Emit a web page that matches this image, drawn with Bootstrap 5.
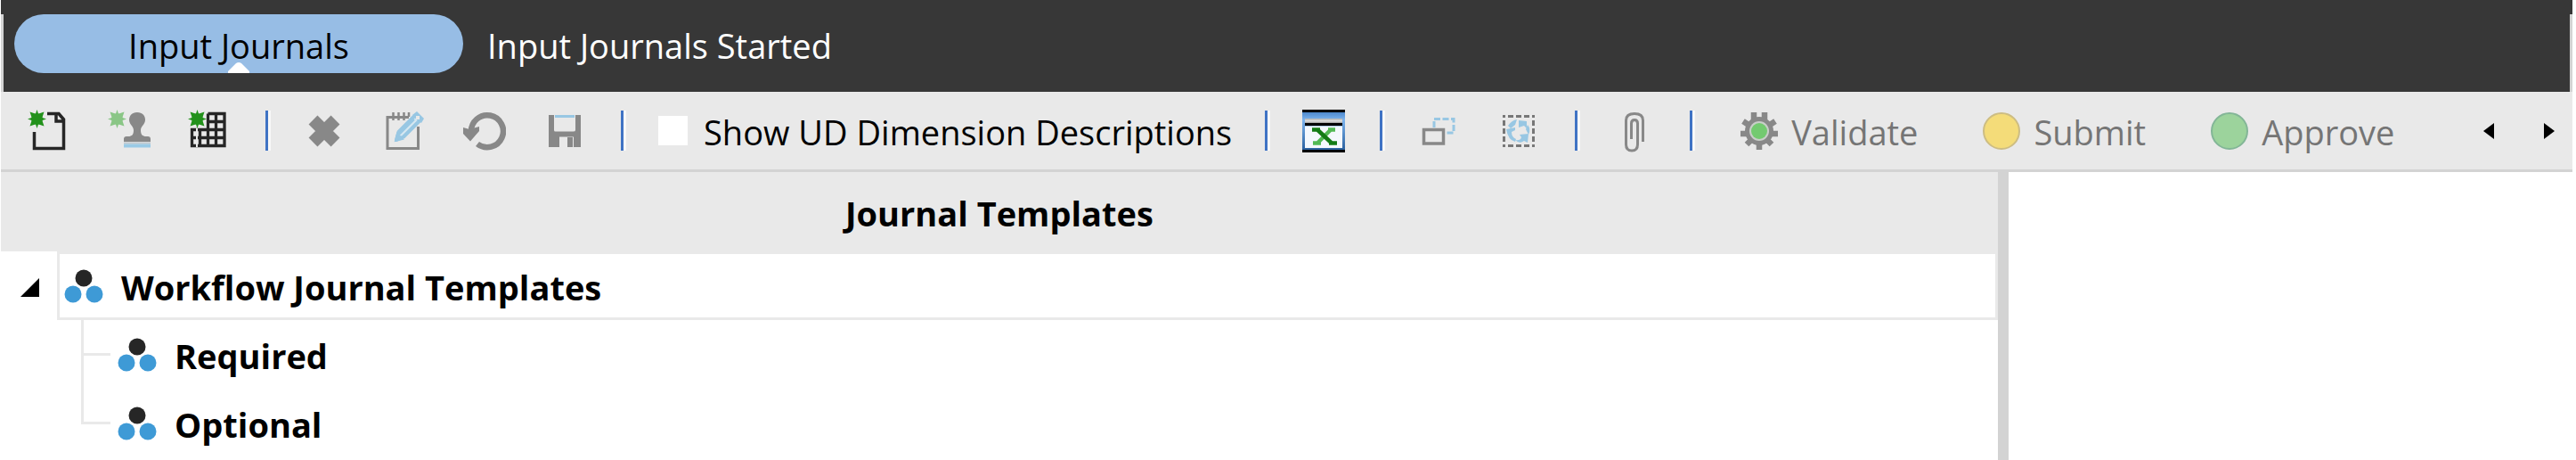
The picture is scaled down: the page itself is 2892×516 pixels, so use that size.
<!DOCTYPE html>
<html lang="en">
<head>
<meta charset="utf-8">
<meta name="viewport" content="width=device-width, initial-scale=1">
<title>Input Journals</title>
<link href="https://cdn.jsdelivr.net/npm/bootstrap@5.3.0/dist/css/bootstrap.min.css" rel="stylesheet">
<style>
  :root { --dark: #373737; --bar: #e9e9e9; --rule: #d3d3d3; --pill: #97bde5; --off: #757575; }
  body { font-family: "Open Sans", "Noto Sans", sans-serif; font-size: 38px; line-height: 48px; color: #000; background: #fff; }
  .app-shell { padding: 0 4px 0 1px; }
  .text-cell { padding-top: 3px; }
  .title-strip { background: var(--dark); padding-top: 16px; }
  .title-row { border: solid var(--rule); border-width: 0 3px; height: 87px; padding-left: 12px; gap: 27px; }
  .step-pill { width: 504px; height: 66px; border: 0; padding: 3px 0 0; border-radius: 33px; background: var(--pill); color: #000; }
  .step-pill svg { left: 240px; bottom: 0; }
  .step-state { color: #fff; padding-top: 11px; }
  .tool-bar { background: var(--bar); border-bottom: 3px solid var(--rule); height: 90px; padding-left: 30px; }
  .tool-group { gap: 42px; }
  .tool-bar button { border: 0; padding: 0; background: none; color: inherit; }
  .tool-bar svg { display: block; flex: none; }
  .divider { width: 6px; height: 45px; margin: 0 36px 0 39px; background: linear-gradient(90deg, #3f73c4 0 3px, #f8f8f8 3px 6px); flex: none; }
  .check-tool { gap: 18px; margin-right: -2px; }
  .check-tool .form-check-input[type=checkbox] { width: 33px; height: 33px; margin: 0; border: 0; border-radius: 0; background-color: #fff; }
  .stages { gap: 70px; margin-left: 12px; }
  .tool-bar .stage-btn { color: var(--off); gap: 12px; }
  .scrollers { gap: 56px; padding-right: 20px; }
  .tree-pane { flex: 0 0 77.65%; }
  .pane-title { background: var(--bar); height: 89px; font-size: 38px; line-height: 48px; }
  .splitter { width: 12px; background: var(--rule); flex: none; }
  .tree-row { height: 77px; }
  .root-row .toggle { width: 63px; padding: 4px 0 0 22px; border: 0; background: none; }
  .root-box { border: 3px solid var(--bar); gap: 21px; padding-left: 6px; }
  .branch { margin-left: 90px; }
  .branch .tree-row { gap: 21px; }
  .branch .elbow { width: 33px; height: 77px; margin-right: -12px; }
</style>
</head>
<body>
<svg width="0" height="0" class="position-absolute" aria-hidden="true">
  <defs>
    <g id="burst">
      <circle cx="10.500" cy="10.500" r="6.500"/>
      <path d="M10.500 0l2 6h-4zM10.500 21l2-6h-4zM0 10.500l6-2v4zM21 10.500l-6-2v4zM2.500 2.500l6 2-4 4zM18.500 2.500l-2 6-4-4zM2.500 18.500l2-6 4 4zM18.500 18.500l-6-2 4-4z"/>
    </g>
    <g id="nodes">
      <circle cx="21" cy="9" r="9.500" fill="#262626"/>
      <circle cx="9" cy="27" r="9.500" fill="#3e9ad6"/>
      <circle cx="33" cy="27" r="9.500" fill="#3e9ad6"/>
    </g>
    <linearGradient id="xb" x2="0" y2="1"><stop offset="0" stop-color="#4d88cc"/><stop offset=".2" stop-color="#7db4ee"/><stop offset="1" stop-color="#2b619f"/></linearGradient>
    <linearGradient id="xt" x2="0" y2="1"><stop offset="0" stop-color="#b0b0b0"/><stop offset=".4" stop-color="#e2e2e2"/><stop offset="1" stop-color="#555"/></linearGradient>
  </defs>
</svg>

<div class="app-shell d-flex flex-column min-vh-100">
  <header class="title-strip">
    <div class="title-row d-flex align-items-start">
      <button type="button" class="step-pill position-relative">Input Journals
        <svg class="position-absolute" width="24" height="12" viewBox="0 0 24 12" aria-hidden="true"><path d="M0 12V10L9 1Q12-1 15 1L24 10V12z" fill="#fff"/></svg>
      </button>
      <div class="step-state">Input Journals Started</div>
    </div>
  </header>

  <div class="tool-bar d-flex align-items-center" role="toolbar" aria-label="Journal tools">
    <div class="tool-group d-flex align-items-center">
      <button type="button" aria-label="New journal"><svg width="48" height="48" viewBox="0 0 48 48"><path d="M22 4.500H35L40.500 11V43.500H7.500V25M32 4.500V13H41" fill="none" stroke="#262626" stroke-width="3.500"/><path d="M35 4l7 8h-3z" fill="#262626"/><use href="#burst" fill="#22911b"/></svg></button>
      <button type="button" aria-label="New from template"><svg width="48" height="48" viewBox="0 0 48 48"><use href="#burst" fill="#8ac686"/><path d="M33 3c6 0 9 4 9 8.500 0 5-5 7-5 11.500 0 5 2 7 6 7h2q3 0 3 3v3H18v-3q0-3 3-3h2c4 0 6-2 6-7 0-4.500-5-6.500-5-11.500C24 7 27 3 33 3z" fill="#888"/><path d="M18 37.500h30" stroke="#bfc8ce" stroke-width="2"/><path d="M18 40.500h30" stroke="#9acae6" stroke-width="4"/></svg></button>
      <button type="button" aria-label="New grid"><svg width="48" height="48" viewBox="0 0 48 48"><path d="M22.500 4.500H41V40.500H4.500V22.500H41M22.500 4.500V40.500M31.500 4.500V40.500M41 3V42M13.500 22.500V40.500M22.500 13.500H41M4.500 31.500H41" fill="none" stroke="#262626" stroke-width="3.300"/><path d="M10 21V42" stroke="#e9e9e9" stroke-width="2"/><use href="#burst" fill="#22911b"/></svg></button>
    </div>
    <span class="divider"></span>
    <div class="tool-group d-flex align-items-center">
      <button type="button" aria-label="Delete"><svg width="48" height="48" viewBox="0 0 48 48"><path d="M11.500 11.500L36.500 36.500M36.500 11.500L11.500 36.500" stroke="#888" stroke-width="14"/></svg></button>
      <button type="button" aria-label="Edit"><svg width="48" height="48" viewBox="0 0 48 48"><path d="M8 8.500H5V43.500H39.500V19M8 8.500H29" fill="none" stroke="#888" stroke-width="3"/><path d="M11.500 3v9M17.500 3v9M23.500 3v9M29 3v5" stroke="#888" stroke-width="2.500"/><path d="M15 34l2.500-9L36 6.500l5.500 5.500L23 30.500z" fill="#d5e7f1" stroke="#98c7e3" stroke-width="4" stroke-linejoin="round"/><path d="M14 35l2-8 6 6zM18 28L35 11M22 31L38 15" stroke="#98c7e3" fill="#98c7e3" stroke-width="2"/><path d="M38 2l8 8-3 5-10-9z" fill="#98c7e3"/><rect x="37" y="7" width="4" height="4" fill="#e9e9e9"/></svg></button>
      <button type="button" aria-label="Refresh"><svg width="48" height="48" viewBox="0 0 48 48"><path d="M9 25A18 18 0 1 1 16 38.500" fill="none" stroke="#888" stroke-width="6.500"/><path d="M0 20l7 2 11-3v5L8 35.500 0 27z" fill="#888"/></svg></button>
      <button type="button" aria-label="Save"><svg width="48" height="48" viewBox="0 0 48 48"><path d="M6 6h6v17q0 1.500 1.500 1.500h20Q36 24.500 36 23V6h6v36H34V30.500H18V42H6z" fill="#888"/><path d="M27 31h6v11h-6z" fill="#888"/><path d="M36 28h6v14h-6z" fill="#888"/><path d="M13 7.500h22" stroke="#98c7e3" stroke-width="3"/></svg></button>
    </div>
    <span class="divider"></span>
    <div class="check-tool d-flex align-items-center">
      <input class="form-check-input" type="checkbox" id="showUd">
      <label class="text-cell text-nowrap" for="showUd">Show UD Dimension Descriptions</label>
    </div>
    <span class="divider"></span>
    <button type="button" aria-label="Export to Excel"><svg width="48" height="48" viewBox="0 0 48 48"><path d="M0 0h48v48H0z"/><path d="M0 3h48v42H0z" fill="url(#xb)"/><path d="M3 10h42v7H3z" fill="url(#xt)"/><path d="M3 15h42v3H3z"/><path d="M3 18.500h42V43H3z" fill="#f4f8fd"/><path d="M32 22.500L17 37.500M29 22.500h8M12 37.500h9" stroke="#52b954" stroke-width="4.500"/><path d="M11 22.500h9M17 22.500L33 37.500M30 37.500h9" stroke="#137b15" stroke-width="4.500"/></svg></button>
    <span class="divider"></span>
    <div class="tool-group d-flex align-items-center">
      <button type="button" aria-label="Cascade windows"><svg width="48" height="48" viewBox="0 0 48 48"><path d="M19 20V10.500H41V26H31" fill="none" stroke="#98c7e3" stroke-width="3" stroke-dasharray="7 2.500"/><rect x="7.500" y="22.500" width="22" height="15.500" fill="none" stroke="#888" stroke-width="3.500"/></svg></button>
      <button type="button" aria-label="Select region"><svg width="48" height="48" viewBox="0 0 48 48"><path d="M6 7.500H42M6 40.500H42M7.500 6V42M40.500 6V42" fill="none" stroke="#777" stroke-width="3" stroke-dasharray="3 3 6 3 6 3 6 3 3"/><path d="M12 18q4-6 10-7l-2 6-5 4zM24 12l9 1v8l-3-3-6 2zM34 17q4 5 1 11l-3-6zM10 22l10-2v3l-4 2q0 6 5 8l-1 3q-8-2-10-14zM20 34q6 1 7-3l-2-3 10-1-1 10-4-2q-5 4-10-1z" fill="#98c7e3"/></svg></button>
    </div>
    <span class="divider"></span>
    <button type="button" aria-label="Attachments"><svg width="48" height="48" viewBox="0 0 48 48"><path d="M21.500 33V15.500Q21.500 11.500 25 11.500T28.500 15.500V39Q28.500 46 22 46T15.500 39V12Q15.500 4.500 25 4.500T34.500 12V36" fill="none" stroke="#888" stroke-width="3"/></svg></button>
    <span class="divider"></span>
    <div class="stages d-flex align-items-center">
      <button type="button" class="stage-btn d-flex align-items-center"><svg width="48" height="48" viewBox="0 0 48 48"><g transform="translate(24 24)"><path d="M-6-9V-21M6-9V-21M-9-5L-18-11M9-5L18-11M-10 3H-21M10 3H21M-8 9L-14 15M8 9L14 15M0 9V21" stroke="#888" stroke-width="6.500"/><circle r="16" fill="#888"/><circle r="11" fill="#c9cec9"/><circle r="9" fill="#73ca70"/></g></svg><span class="text-cell">Validate</span></button>
      <button type="button" class="stage-btn d-flex align-items-center"><svg width="48" height="48" viewBox="0 0 48 48"><circle cx="24" cy="24" r="20" fill="#f4dc79" stroke="#cdbd83" stroke-width="2"/></svg><span class="text-cell">Submit</span></button>
      <button type="button" class="stage-btn d-flex align-items-center"><svg width="48" height="48" viewBox="0 0 48 48"><circle cx="24" cy="24" r="20" fill="#9cd39c" stroke="#83b697" stroke-width="2"/></svg><span class="text-cell">Approve</span></button>
    </div>
    <div class="scrollers d-flex ms-auto">
      <button type="button" aria-label="Scroll left"><svg width="12" height="18" viewBox="0 0 12 18"><path d="M12 0v18L0 9z"/></svg></button>
      <button type="button" aria-label="Scroll right"><svg width="12" height="18" viewBox="0 0 12 18"><path d="M0 0v18l12-9z"/></svg></button>
    </div>
  </div>

  <main class="d-flex flex-grow-1">
    <section class="tree-pane">
      <h1 class="pane-title text-cell d-flex align-items-center justify-content-center fw-bold m-0">Journal Templates</h1>
      <div class="root-row tree-row d-flex fw-bold">
        <button type="button" class="toggle d-flex align-items-center" aria-label="Collapse"><svg width="21" height="21" viewBox="0 0 21 21"><path d="M21 0v21H0z"/></svg></button>
        <div class="root-box d-flex align-items-center flex-grow-1"><svg width="42" height="36" overflow="visible"><use href="#nodes"/></svg><span class="text-cell">Workflow Journal Templates</span></div>
      </div>
      <ul class="branch list-unstyled mb-0 fw-bold">
        <li class="tree-row d-flex align-items-center"><svg class="elbow" viewBox="0 0 33 77"><path d="M1.500 0V77M0 38.500H33" stroke="#e9e9e9" stroke-width="3"/></svg><svg width="42" height="36" overflow="visible"><use href="#nodes"/></svg><span class="text-cell">Required</span></li>
        <li class="tree-row d-flex align-items-center"><svg class="elbow" viewBox="0 0 33 77"><path d="M1.500 0V40M0 38.500H33" stroke="#e9e9e9" stroke-width="3"/></svg><svg width="42" height="36" overflow="visible"><use href="#nodes"/></svg><span class="text-cell">Optional</span></li>
      </ul>
    </section>
    <div class="splitter"></div>
    <section class="flex-grow-1"></section>
  </main>
</div>
<script src="https://cdn.jsdelivr.net/npm/bootstrap@5.3.0/dist/js/bootstrap.bundle.min.js"></script>
</body>
</html>
